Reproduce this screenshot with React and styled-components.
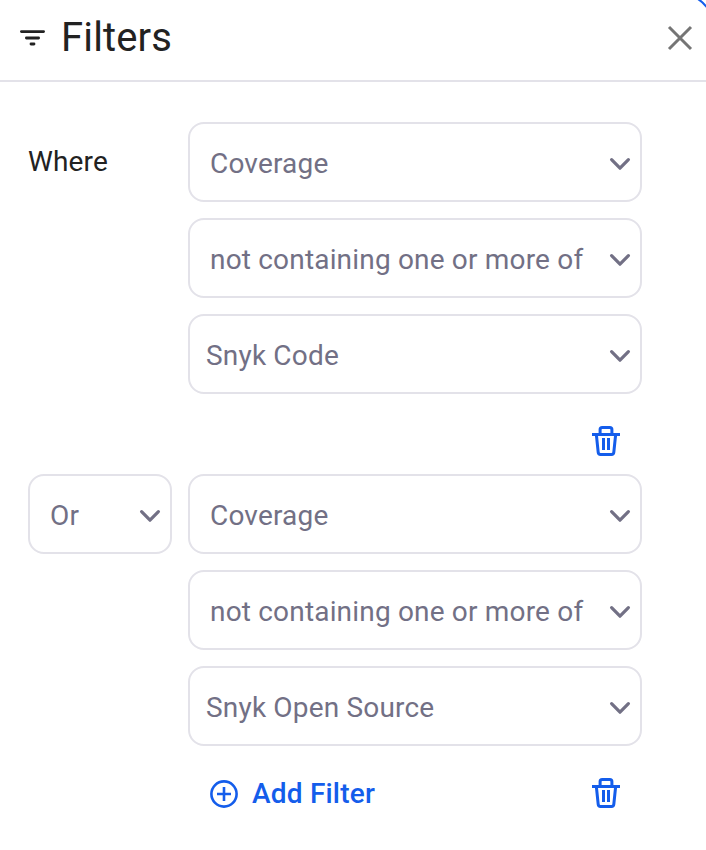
import React from "react";
import styled, { createGlobalStyle } from "styled-components";

const GlobalStyle = createGlobalStyle`
  *, *::before, *::after { box-sizing: border-box; }
  body { margin: 0; background: #fff; font-family: Roboto, "Liberation Sans", sans-serif; overflow: hidden; }
  button { font: inherit; background: none; border: 0; padding: 0; margin: 0; text-align: left; cursor: pointer; }
  svg { display: block; flex: none; }
`;

const Panel = styled.main`
  position: relative;
  width: 706px;
  height: 850px;
  background: #fff;
  overflow: hidden;
`;

const PanelCorner = styled.svg`
  position: absolute;
  top: 0;
  right: 0;
`;

const Header = styled.header`
  display: flex;
  align-items: center;
  height: 82px;
  padding: 0 12px 4px 18px;
  border-bottom: 2px solid #e3e2e9;
`;

const Title = styled.h1`
  flex: 1;
  margin: 0 0 0 13px;
  font-size: 40px;
  line-height: 48px;
  font-weight: 400;
  letter-spacing: 0.15px;
  color: #222;
`;

const IconButton = styled.button`
  display: flex;
  color: ${({ $color }) => $color};
`;

const Groups = styled.div`
  padding: 40px 64px 0 28px;
`;

const Group = styled.section`
  display: grid;
  grid-template-columns: 144px 454px;
  column-gap: 16px;
`;

const Where = styled.div`
  height: 80px;
  line-height: 80px;
  font-size: 28px;
  letter-spacing: 0.15px;
  color: #222;
`;

const Fields = styled.div`
  display: flex;
  flex-direction: column;
  gap: 16px;
`;

const Select = styled.button`
  display: flex;
  align-items: center;
  justify-content: space-between;
  width: 100%;
  height: 80px;
  padding: 4px 8px 0 ${({ $inset }) => $inset}px;
  border: 2px solid #e3e2e9;
  border-radius: 16px;
  background: #fff;
  color: #727085;
  font-size: 28px;
  line-height: 36px;
  letter-spacing: 0.18px;
  white-space: nowrap;
`;

const Actions = styled.div`
  grid-column: 2;
  display: flex;
  align-items: center;
  height: 80px;
  padding: 14px 22px 0 22px;
`;

const AddButton = styled.button`
  display: flex;
  align-items: center;
  gap: 14px;
  padding-top: 2px;
  color: #145deb;
  font-size: 28px;
  line-height: 36px;
  font-weight: 500;
  letter-spacing: 0.2px;
`;

const DeleteButton = styled(IconButton)`
  margin-left: auto;
`;

const FilterIcon = () => (
  <svg width="30" height="22" viewBox="0 0 30 22" fill="none" stroke="#222" strokeWidth="2.8" strokeLinecap="round">
    <path d="M3.4 4.6H25.6M8.4 11H20.6M13 17H16" />
  </svg>
);

const CloseIcon = () => (
  <svg width="28" height="28" viewBox="0 0 28 28" fill="none" stroke="currentColor" strokeWidth="3">
    <path d="M3 3L25 25M25 3L3 25" />
  </svg>
);

const Chevron = () => (
  <svg width="24" height="16" viewBox="0 0 24 16" fill="none" stroke="currentColor" strokeWidth="3.2" strokeLinecap="round" strokeLinejoin="round">
    <path d="M3.6 3.6L12 12.2L20.4 3.6" />
  </svg>
);

const TrashIcon = () => (
  <svg width="28" height="30" viewBox="0 0 28 30" fill="none" stroke="currentColor" strokeWidth="3">
    <path d="M8.1 8V3.6Q8.1 1.5 10.2 1.5H17.8Q19.9 1.5 19.9 3.6V8M0 8.5H28" />
    <path d="M4.4 9L6.2 26.4Q6.4 28.5 8.5 28.5H19.5Q21.6 28.5 21.8 26.4L23.6 9M11.5 12V24M16.5 12V24" />
  </svg>
);

const PlusCircle = () => (
  <svg width="28" height="28" viewBox="0 0 28 28" fill="none" stroke="currentColor" strokeWidth="2.6">
    <circle cx="14" cy="14" r="12.6" />
    <path d="M14 7V21M7 14H21" />
  </svg>
);

const Dropdown = ({ label, inset = 20 }) => (
  <Select type="button" $inset={inset}>
    <span>{label}</span>
    <Chevron />
  </Select>
);

const FilterGroup = ({ lead, value, canAdd }) => (
  <Group>
    <div>{lead}</div>
    <Fields>
      <Dropdown label="Coverage" />
      <Dropdown label="not containing one or more of" />
      <Dropdown label={value} inset={16} />
    </Fields>
    <Actions>
      {canAdd && (
        <AddButton type="button">
          <PlusCircle />
          <span>Add Filter</span>
        </AddButton>
      )}
      <DeleteButton type="button" $color="#145deb" aria-label="Delete filter">
        <TrashIcon />
      </DeleteButton>
    </Actions>
  </Group>
);

export default function App() {
  return (
    <>
      <GlobalStyle />
      <Panel>
        <Header>
          <FilterIcon />
          <Title>Filters</Title>
          <IconButton type="button" $color="#757575" aria-label="Close">
            <CloseIcon />
          </IconButton>
        </Header>
        <Groups>
          <FilterGroup lead={<Where>Where</Where>} value="Snyk Code" />
          <FilterGroup lead={<Dropdown label="Or" />} value="Snyk Open Source" canAdd />
        </Groups>
        <PanelCorner width="10" height="8" viewBox="0 0 10 8" fill="none" stroke="#145deb" strokeWidth="2">
          <path d="M1 -1.5Q6.5 1.5 11 7.5" />
        </PanelCorner>
      </Panel>
    </>
  );
}
